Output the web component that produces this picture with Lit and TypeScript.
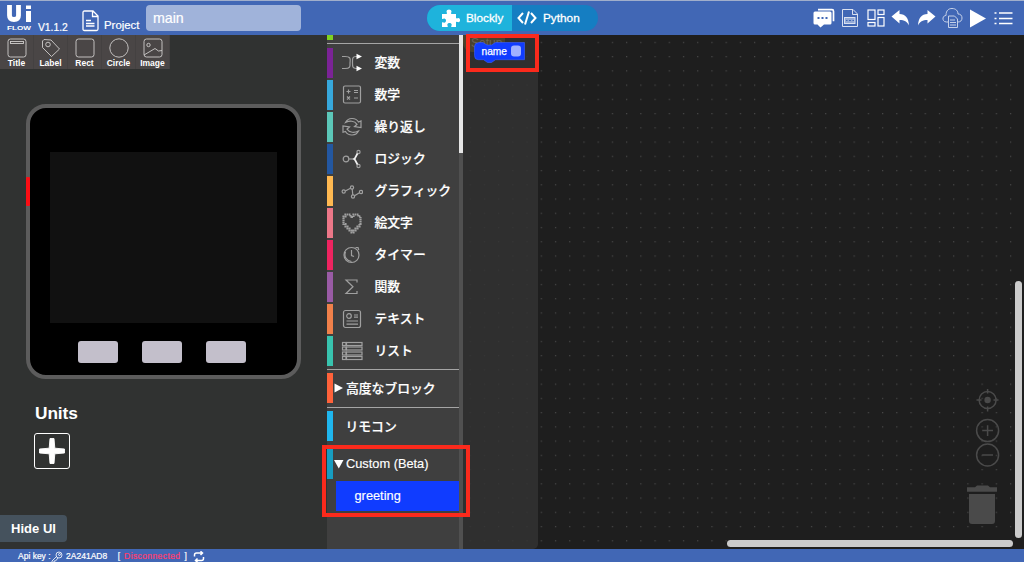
import { html, css, svg, LitElement, TemplateResult } from 'lit';
import { customElement, property } from 'lit/decorators.js';

interface Category {
  name: string;
  color: string;
  icon: TemplateResult;
}

const categories: Category[] = [
  {
    name: '変数',
    color: '#7b2396',
    icon: svg`
      <path d="M1 4.500h3c7 0 5 4 5 6.500s1 5.500-5 5.500H1M17 4.500h-2c-4 0-3.500 3-3.500 6.500s0 5.500 3.500 5.500h2" />
      <path class="solid" d="M15.500 1.700l5.500 2.800-5.500 2.700zM15.500 13.800l5.500 2.700-5.500 2.800z" />`,
  },
  {
    name: '数学',
    color: '#37a8dc',
    icon: svg`
      <rect x="2.500" y="2" width="17" height="17" rx="1.500" />
      <path d="M5.500 7.500h4M7.500 5.500v4M13 6.500h4M13 8.500h4M6 12.500l3 3M9 12.500l-3 3M13 14h4" />`,
  },
  {
    name: '繰り返し',
    color: '#5cc7b8',
    icon: svg`
      <path d="M4.500 6.500C7 1.500 14.500 1 17.500 6l2.500-1v6.500l-6.500-1 2.500-2.200C13.500 4.500 8.500 4.500 4.500 6.500z" />
      <path d="M17.500 15C15 20 7.500 20.500 4.500 15.500L2 16.300V10l6.500 1L6 13.200c2.500 3.800 7.500 3.800 11.500 1.800z" />`,
  },
  {
    name: 'ロジック',
    color: '#2357a0',
    icon: svg`
      <circle cx="5" cy="11" r="2.800" />
      <circle cx="17.500" cy="4" r="1.600" />
      <circle cx="17.500" cy="18" r="1.600" />
      <path d="M8 11h3" />
      <path class="bright" d="M16.500 5.500L13.500 11l3 5.500M11.500 11h2" />`,
  },
  {
    name: 'グラフィック',
    color: '#ffb951',
    icon: svg`
      <circle cx="2.700" cy="11.500" r="1.600" />
      <circle cx="11" cy="7.500" r="1.600" />
      <circle cx="12" cy="16.500" r="1.600" />
      <circle cx="20" cy="12" r="1.600" />
      <path d="M4.300 11l5.200-2.800M11.200 9l.6 6M13.500 15.800l5-3" />`,
  },
  {
    name: '絵文字',
    color: '#ec7788',
    icon: svg`
      <path class="pixel" d="M11 5H9.500V2.500h-5v2h-2v7.500h2v2.500h2v2h2v2h2v2h2v-2h2v-2h2v-2h2V12h1V4.500h-2v-2h-5V5z" />`,
  },
  {
    name: 'タイマー',
    color: '#ee2460',
    icon: svg`
      <circle cx="10.500" cy="11" r="7.500" />
      <path d="M10.500 6v5.500l2.500 1M14.500 3.500l2.500 0 .800 2.500M4.500 8c-2 5 1.500 9 6 9.500" />`,
  },
  {
    name: '関数',
    color: '#995ba5',
    icon: svg`<path d="M16 6.500V4H5l7 6.800L5 17.500h11V15" />`,
  },
  {
    name: 'テキスト',
    color: '#f0804a',
    icon: svg`
      <rect x="2.500" y="2.500" width="17" height="17" rx="2" />
      <circle cx="8" cy="8" r="2.300" />
      <path d="M13 7h4M13 9.200h4M5.500 13h11.500M5.500 16.200h11.500" />`,
  },
  {
    name: 'リスト',
    color: '#38c3ae',
    icon: svg`
      <rect x="1.500" y="2.500" width="3.500" height="3" />
      <rect x="5.500" y="2.500" width="15.500" height="3" />
      <rect x="1.500" y="7" width="3.500" height="3" />
      <rect x="5.500" y="7" width="15.500" height="3" />
      <rect x="1.500" y="12" width="3.500" height="3" />
      <rect x="5.500" y="12" width="15.500" height="3" />
      <rect x="1.500" y="16.500" width="3.500" height="3" />
      <rect x="5.500" y="16.500" width="15.500" height="3" />`,
  },
];

const widgets = [
  {
    name: 'Title',
    icon: svg`<rect x="1" y="1" width="18" height="18" rx="2.500" /><rect x="3.500" y="3.500" width="13" height="2" />`,
  },
  {
    name: 'Label',
    icon: svg`<path d="M1.500 3v6.500l9 9 8-7.500-8.500-9L3 1.500z" /><circle cx="7" cy="6.500" r="2.300" />`,
  },
  { name: 'Rect', icon: svg`<rect x="1" y="1" width="18" height="18" rx="2.500" />` },
  { name: 'Circle', icon: svg`<circle cx="10" cy="10" r="9.200" />` },
  {
    name: 'Image',
    icon: svg`
      <rect x="1" y="1" width="18" height="18" rx="2.500" />
      <circle cx="5.500" cy="7" r="1.700" />
      <path d="M1 17l11-6.500 3.500 2.500 3.500-.5" />`,
  },
];

/**
 * A row of the block toolbox.
 *
 * @slot - Content of the row
 */
@customElement('flow-row')
export class FlowRow extends LitElement {
  @property()
  color = '#000';

  static styles = css`
    :host {
      display: flex;
      height: 30px;
      margin-bottom: 2px;
      flex: none;
    }
    .strip {
      width: 6px;
      flex: none;
    }
    .content {
      display: flex;
      align-items: center;
      flex: 1;
      min-width: 0;
      white-space: nowrap;
    }
  `;

  render() {
    return html`
      <div class="strip" style="background:${this.color}"></div>
      <div class="content"><slot></slot></div>
    `;
  }
}

@customElement('flow-header')
export class FlowHeader extends LitElement {
  static styles = css`
    :host {
      display: flex;
      box-sizing: border-box;
      height: 35px;
      border-top: 1px solid #a0aecb;
      background: #4167b5;
      color: #fff;
    }
    svg {
      display: block;
      flex: none;
      fill: none;
      stroke: #fff;
    }
    .left {
      display: flex;
      width: 427px;
      flex: none;
    }
    .logo {
      margin-left: 6px;
    }
    .logo text {
      fill: #fff;
      font-family: 'Liberation Sans', Arial, sans-serif;
      font-weight: 700;
    }
    .version {
      width: 44px;
      margin: 19px 0 0 5px;
      font-size: 10.300px;
      line-height: 15px;
      -webkit-text-stroke: 0.2px #fff;
    }
    .file {
      margin-top: 9px;
    }
    .project {
      margin: 16px 0 0 5px;
      width: 42px;
      font-size: 11.400px;
      line-height: 16px;
      -webkit-text-stroke: 0.2px #fff;
    }
    .name {
      box-sizing: border-box;
      width: 155px;
      height: 26px;
      margin-top: 4px;
      padding-left: 7px;
      border-radius: 4px;
      background: #a0b3da;
      font-size: 14.200px;
      line-height: 26px;
      -webkit-text-stroke: 0.2px #fff;
    }
    .switch {
      display: flex;
      width: 171px;
      height: 26px;
      margin-top: 4px;
      border-radius: 13px;
      overflow: hidden;
      background: #157ec2;
      font-size: 11.800px;
      line-height: 26px;
    }
    .mode {
      display: flex;
      align-items: center;
      -webkit-text-stroke: 0.3px #fff;
    }
    .blockly {
      box-sizing: border-box;
      width: 85px;
      padding-left: 15px;
      gap: 6px;
      background: #1eb3dc;
    }
    .python {
      padding-left: 5px;
      gap: 6px;
    }
    .actions {
      display: flex;
      margin-left: auto;
      padding: 5px 9px 0 0;
      gap: 3.700px;
    }
  `;

  render() {
    return html`
      <div class="left">
        <svg class="logo" width="27" height="32" viewBox="0 0 27 32">
          <path d="M3.500 4v10.500q0 4 4.500 4t4.500-4V4" stroke-width="4.800" />
          <path d="M22.500 10v11M22.500 4.500v3.500" stroke-width="5" />
          <text x="1" y="29.300" font-size="5.800" textLength="24" lengthAdjust="spacingAndGlyphs" stroke="none">FLOW</text>
        </svg>
        <div class="version">V1.1.2</div>
        <svg class="file" width="17" height="22" viewBox="0 0 17 22" stroke-width="1.300">
          <path d="M2.500 1h8.500l5 5v13q0 1.500-1.500 1.500h-12Q1 20.500 1 19V2.500Q1 1 2.500 1zM10.500 1v5.500H16M4 10.500h5M4 13.500h8.500M4 16h8.500" />
        </svg>
        <div class="project">Project</div>
        <div class="name">main</div>
      </div>
      <div class="switch">
        <div class="mode blockly">
          <svg width="18" height="18" viewBox="0 0 18 18">
            <path fill="#fff" stroke="none" d="M0 5h4.500c1-1 0-1.500 0-2.500C4.500-.3 9.500-.3 9.500 2.500c0 1-1 1.500 0 2.500h4.500v4c1 1 1.500 0 2.300 0 2.300 0 2.300 4.200 0 4.200-.8 0-1.300-1-2.300 0v4.800H9.500c-.9-.9.200-1.300.2-2.300 0-2.200-4.400-2.200-4.400 0 0 1 1.100 1.400.2 2.300H0v-4.500c.9-.9 1.300.2 2.200.2 2.400 0 2.400-4.200 0-4.200-.9 0-1.300 1.100-2.200.2z" />
          </svg>
          <span>Blockly</span>
        </div>
        <div class="mode python">
          <svg width="20" height="16" viewBox="0 0 20 16" stroke-width="2">
            <path d="M6 3L1.500 8 6 13M14 3l4.500 5-4.500 5M12 1.500L8 14.500" />
          </svg>
          <span>Python</span>
        </div>
      </div>
      <div class="actions">
        <svg width="22" height="24" viewBox="0 0 22 24">
          <path d="M5 3.700h14q1.500 0 1.500 1.500v10" stroke-width="1.700" />
          <path fill="#fff" stroke="none" d="M2 5.500h15q1.500 0 1.500 1.500v10q0 1.500-1.500 1.500h-6l-3.500 3-3-3H2Q.5 18.500.5 17V7Q.5 5.500 2 5.500z" />
          <path stroke="#4167b5" stroke-width="2" stroke-dasharray="2 2" d="M4.500 12h10" />
        </svg>
        <svg width="22" height="24" viewBox="0 0 22 24" opacity=".8">
          <path d="M3.500 3.500h10.500l4.500 4.500v12.500h-15zM13.500 3.500v5h5" />
          <rect x="5.500" y="11.500" width="10.500" height="6" fill="#a9bbdf" />
          <path stroke="#4167b5" d="M7 14.500h1.500M10 14.500h2M13.500 14.500H15" />
        </svg>
        <svg width="22" height="24" viewBox="0 0 22 24" stroke-width="1.200">
          <rect x="3" y="4" width="7" height="9.500" />
          <rect x="13" y="4" width="6" height="4.500" />
          <rect x="3" y="16.500" width="7" height="3.500" />
          <rect x="13" y="11.500" width="6" height="8.500" />
        </svg>
        <svg width="22" height="24" viewBox="0 0 22 24">
          <path fill="#fff" stroke="none" d="M1.500 10.500L9.500 4v4c6 0 9 4 9.500 11.500-2-4-4.500-5.500-9.500-5.500v3.500z" />
        </svg>
        <svg width="22" height="24" viewBox="0 0 22 24">
          <path fill="#fff" stroke="none" d="M19.500 10.500l-8-6.500v4c-6 0-9 4-9.500 11.500 2-4 4.500-5.500 9.500-5.500v3.500z" />
        </svg>
        <svg width="22" height="24" viewBox="0 0 22 24" opacity=".7">
          <path d="M6 16H4.500C1.500 16 .7 13.500 1 12c.4-1.800 1.800-2.500 3-2.500C4 4 7 2.500 10 2.500c4 0 6 2.500 6 5.500 2.500 0 4 1.500 4 4s-1.500 4-4 4" />
          <path d="M6.500 10h6l3 3v8.500h-9zM8 14h5M8 16.500h6M8 19h6" />
        </svg>
        <svg width="22" height="24" viewBox="0 0 22 24">
          <path fill="#fff" stroke="none" d="M3 3.500l16 9-16 9z" />
        </svg>
        <svg width="22" height="24" viewBox="0 0 22 24" stroke-width="1.700">
          <path d="M1.500 7h2M6 7h13.500M1.500 12.500h2M6 12.500h13.500M1.500 17.500h2M6 17.500h13.500" />
        </svg>
      </div>
    `;
  }
}

@customElement('flow-designer')
export class FlowDesigner extends LitElement {
  static styles = css`
    :host {
      display: flex;
      flex-direction: column;
      width: 327px;
      flex: none;
      background: #303231;
      color: #fff;
    }
    svg {
      display: block;
      fill: none;
      stroke: #d0cecd;
      stroke-width: 0.9;
    }
    .widgets {
      display: flex;
      width: 170px;
      height: 34px;
      background: #4a4646;
    }
    .widget {
      box-sizing: border-box;
      display: flex;
      flex-direction: column;
      align-items: center;
      width: 34px;
      padding-top: 3px;
      border-right: 1px solid #444141;
      font-size: 8.500px;
      font-weight: 700;
      line-height: 10px;
    }
    .widget span {
      margin-top: -0.500px;
    }
    .device {
      position: relative;
      box-sizing: border-box;
      width: 274.500px;
      height: 274.500px;
      margin: 35px 0 0 26px;
      padding: 44px 0 0 19.500px;
      border: 4px solid #5c5c5c;
      border-radius: 20px;
      background: #000;
    }
    .power {
      position: absolute;
      left: -4px;
      top: 69px;
      width: 4px;
      height: 29px;
      border-radius: 1px;
      background: #fb0d14;
    }
    .screen {
      width: 227.500px;
      height: 171px;
      background: #111;
    }
    .buttons {
      display: flex;
      gap: 24px;
      margin: 18px 0 0 28.500px;
    }
    .button {
      width: 40px;
      height: 21.500px;
      border-radius: 3px;
      background: #c3bfcb;
    }
    h2 {
      margin: 24px 0 0 35px;
      font-size: 17.300px;
      line-height: 20px;
      letter-spacing: -0.100px;
    }
    .add {
      box-sizing: border-box;
      width: 36px;
      height: 36px;
      margin: 10px 0 0 34px;
      border: 1px solid #fff;
      border-radius: 3px;
    }
    .add path {
      fill: #fff;
      stroke: #fff;
      stroke-linejoin: round;
    }
    .hide {
      width: 67px;
      height: 27px;
      margin: auto 0 7px;
      border-radius: 0 4px 4px 0;
      background: #45525d;
      font-size: 13px;
      font-weight: 700;
      line-height: 27px;
      text-align: center;
    }
  `;

  render() {
    return html`
      <div class="widgets">
        ${widgets.map(
          (w) => html`
            <div class="widget">
              <svg width="20" height="20" viewBox="0 0 20 20">${w.icon}</svg>
              <span>${w.name}</span>
            </div>
          `
        )}
      </div>
      <div class="device">
        <div class="power"></div>
        <div class="screen"></div>
        <div class="buttons">
          <div class="button"></div>
          <div class="button"></div>
          <div class="button"></div>
        </div>
      </div>
      <h2>Units</h2>
      <div class="add">
        <svg width="34" height="34" viewBox="0 0 34 34">
          <path d="M15 4.500h4l.8 9.700 9.700.8v4l-9.700.8-.8 9.700h-4l-.8-9.700-9.700-.8v-4l9.700-.8z" />
        </svg>
      </div>
      <div class="hide">Hide UI</div>
    `;
  }
}

@customElement('flow-toolbox')
export class FlowToolbox extends LitElement {
  static styles = css`
    :host {
      display: flex;
      width: 136px;
      flex: none;
      background: #3f3f3f;
      color: #fff;
      font-size: 12.800px;
    }
    .rows {
      display: flex;
      flex-direction: column;
      width: 132px;
    }
    .partial {
      width: 6px;
      height: 4.800px;
      flex: none;
      margin-bottom: 2px;
      background: #7ed321;
    }
    .separator {
      height: 1px;
      flex: none;
      margin: 1.600px 0 3.200px;
      background: #a5a5a5;
    }
    .icon {
      width: 22px;
      height: 22px;
      margin: 0 11.500px 0 8px;
      fill: none;
      stroke: #a0a0a0;
      stroke-width: 1.200;
    }
    .icon .solid {
      fill: #fff;
      stroke: none;
    }
    .icon .bright {
      stroke: #f0f0f0;
      stroke-width: 1.700;
    }
    .icon .pixel {
      stroke-width: 2.200;
      stroke-dasharray: 1.500 0.500;
    }
    .label {
      padding-bottom: 2px;
      font-weight: 500;
      -webkit-text-stroke: 0.200px #fff;
    }
    .latin {
      -webkit-text-stroke: 0.150px #fff;
    }
    .arrow {
      width: 10px;
      height: 10px;
      margin: 0 2px 0 1px;
      fill: #fff;
    }
    .indent {
      padding-left: 12.500px;
    }
    .greeting {
      height: 30px;
      margin-left: 8.500px;
      padding-left: 19px;
      background: #103cff;
      line-height: 30px;
    }
    .scroll {
      width: 4px;
      background: #505050;
    }
    .thumb {
      height: 118px;
      background: #e6e6e6;
    }
  `;

  render() {
    return html`
      <div class="rows">
        <div class="partial"></div>
        <div class="separator"></div>
        ${categories.map(
          (c) => html`
            <flow-row color=${c.color}>
              <svg class="icon" viewBox="0 0 22 22">${c.icon}</svg>
              <span class="label">${c.name}</span>
            </flow-row>
          `
        )}
        <div class="separator"></div>
        <flow-row color="#ff623a">
          <svg class="arrow" viewBox="0 0 10 10"><path d="M.5 .5l8.500 4.500L.5 9.500z" /></svg>
          <span class="label">高度なブロック</span>
        </flow-row>
        <div class="separator"></div>
        <flow-row color="#1fb6ee">
          <span class="label indent">リモコン</span>
        </flow-row>
        <div class="separator"></div>
        <flow-row color="#179dc0">
          <svg class="arrow" viewBox="0 0 10 10"><path d="M0 1h9.500L4.800 9.500z" /></svg>
          <span class="latin">Custom (Beta)</span>
        </flow-row>
        <div class="greeting latin">greeting</div>
      </div>
      <div class="scroll"><div class="thumb"></div></div>
    `;
  }
}

@customElement('flow-workspace')
export class FlowWorkspace extends LitElement {
  static styles = css`
    :host {
      display: block;
      position: relative;
      flex: 1;
      overflow: hidden;
      background: #1e1e1e;
      color: #fff;
    }
    svg {
      display: block;
    }
    .grid,
    .controls,
    .setup,
    .block,
    .bar {
      position: absolute;
    }
    .grid {
      inset: 0;
      width: 100%;
      height: 100%;
    }
    .setup {
      left: 0;
      top: -1px;
      width: 42px;
      height: 18px;
      border-radius: 0 0 0 9px;
      background: #4a422d;
      color: #6a6456;
      font-size: 12px;
      line-height: 18px;
      text-indent: 8px;
    }
    .flyout {
      position: absolute;
      left: 0;
      top: 0;
      bottom: 0;
      width: 75px;
      border-radius: 0 0 5px 0;
      background: rgba(51, 51, 51, 0.8);
    }
    .block {
      left: 11px;
      top: 7px;
    }
    .block text {
      fill: #fff;
      font-size: 11px;
      stroke: #fff;
      stroke-width: 0.250;
    }
    .controls {
      left: 502px;
      top: 350px;
      fill: none;
      stroke: #4a4a4a;
      stroke-width: 1.500;
    }
    .controls .solid {
      fill: #4a4a4a;
      stroke: none;
    }
    .bar {
      border-radius: 4px;
      background: #cbcbcb;
    }
    .vertical {
      left: 552px;
      top: 246px;
      width: 7px;
      height: 257px;
    }
    .horizontal {
      left: 264px;
      top: 504.500px;
      width: 286px;
      height: 7.500px;
    }
  `;

  render() {
    return html`
      <svg class="grid">
        <defs>
          <pattern id="dots" x="77.700" y="6.800" width="14.220" height="14.240" patternUnits="userSpaceOnUse">
            <rect width="1.200" height="1.200" fill="#484848" />
          </pattern>
        </defs>
        <rect width="100%" height="100%" fill="url(#dots)" />
      </svg>
      <div class="flyout"></div>
      <div class="setup">Setup</div>
      <svg class="block" width="52" height="22" viewBox="0 0 52 22">
        <path
          fill="#103cff"
          stroke="#3a5fff"
          stroke-width=".6"
          d="M4.500.5H9l4 2.500h4.500l4-2.500h29v17.200H21.500l-4 2.800h-4l-4-2.800H4.500q-4 0-4-4v-9q0-4 4-4z"
        />
        <text x="7.500" y="12.500" textLength="25.500" lengthAdjust="spacingAndGlyphs">name</text>
        <rect x="37" y="3.500" width="10" height="11" rx="3" fill="#9fb1ff" />
      </svg>
      <svg class="controls" width="44" height="142" viewBox="0 0 44 142">
        <circle cx="22.600" cy="15" r="8.500" />
        <circle class="solid" cx="22.600" cy="15" r="3.200" />
        <path d="M22.600 4v4.500M22.600 21.500v5M11.500 15h5M28.500 15h5" />
        <circle cx="22.600" cy="45.600" r="11" />
        <path d="M17.200 45.600H28M22.600 40.200V51" />
        <circle cx="22.600" cy="70" r="11" />
        <path d="M17.200 70H28" />
        <path class="solid" d="M2 102.300h8l2-1.800h11l2 1.800h7v4.500H2z" />
        <path class="solid" d="M4 109h26v27q0 3-3 3H7q-3 0-3-3z" />
      </svg>
      <div class="bar vertical"></div>
      <div class="bar horizontal"></div>
    `;
  }
}

@customElement('app-root')
export class AppRoot extends LitElement {
  static styles = css`
    :host {
      display: flex;
      flex-direction: column;
      position: relative;
      width: 1024px;
      height: 562px;
      overflow: hidden;
      font-family: 'Liberation Sans', Arial, 'Noto Sans CJK JP', sans-serif;
    }
    main {
      display: flex;
      height: 514px;
    }
    footer {
      box-sizing: border-box;
      display: flex;
      align-items: center;
      height: 13px;
      padding: 2px 0 0 18px;
      background: #4167b5;
      color: #fff;
      font-size: 8.500px;
      line-height: 11px;
      white-space: pre;
      -webkit-text-stroke: 0.200px currentColor;
    }
    footer svg {
      fill: none;
      stroke: #fff;
    }
    .key {
      margin-right: 3.500px;
    }
    .status {
      margin: 0 4px;
      color: #ff3d6e;
      letter-spacing: 0.400px;
    }
    .bracket {
      margin-left: 10.500px;
    }
    .refresh {
      margin-left: 6px;
    }
    .highlight {
      position: absolute;
      box-sizing: border-box;
      border: 4px solid #fb2a1c;
    }
    .name {
      left: 466px;
      top: 34px;
      width: 72.500px;
      height: 37.500px;
    }
    .custom {
      left: 322px;
      top: 444.500px;
      width: 147.500px;
      height: 72.500px;
    }
  `;

  render() {
    return html`
      <flow-header></flow-header>
      <main>
        <flow-designer></flow-designer>
        <flow-toolbox></flow-toolbox>
        <flow-workspace></flow-workspace>
      </main>
      <footer>
        <span>Api key :</span>
        <svg class="key" width="12" height="12" viewBox="0 0 12 12" stroke-width=".8">
          <circle cx="8" cy="4" r="3" /><circle cx="8.500" cy="3.500" r="1" />
          <path d="M5.500 5.500L1 10v1.500h2V10h1.500L7 7" />
        </svg>
        <span>2A241AD8</span>
        <span class="bracket">[</span>
        <span class="status">Disconnected</span>
        <span>]</span>
        <svg class="refresh" width="12" height="12" viewBox="0 0 12 12" stroke-width="1.500">
          <path d="M1.500 5.500V4q0-2 2-2H9M10.500 6v1.500q0 2-2 2H3M7.500 .3L9.500 2l-2 2M4.500 7.500l-2 2 2 1.800" />
        </svg>
      </footer>
      <div class="highlight name"></div>
      <div class="highlight custom"></div>
    `;
  }
}

declare global {
  interface HTMLElementTagNameMap {
    'app-root': AppRoot;
    'flow-row': FlowRow;
    'flow-header': FlowHeader;
    'flow-designer': FlowDesigner;
    'flow-toolbox': FlowToolbox;
    'flow-workspace': FlowWorkspace;
  }
}
